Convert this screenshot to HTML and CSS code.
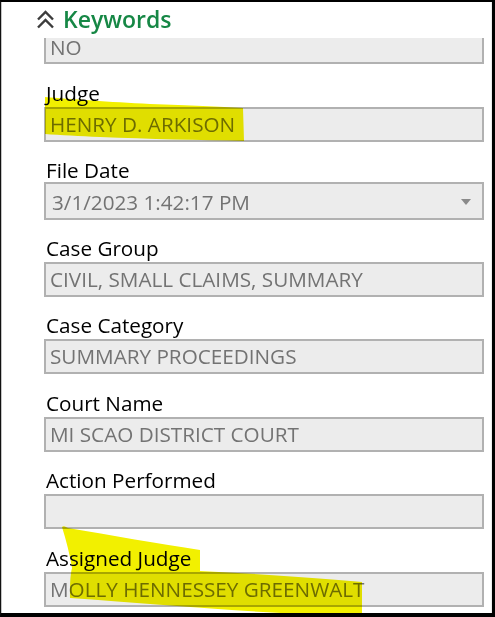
FILE: index.html
```html
<!DOCTYPE html>
<html lang="en">
<head>
<meta charset="utf-8">
<title>Keywords</title>
<link rel="stylesheet" href="styles.css">
</head>
<body>
<div class="frame">
  <div class="panel">
    <div class="header">
      <svg class="chev" width="19" height="20" viewBox="0 0 19 20" aria-hidden="true">
        <polyline points="2,9.5 9.5,2 17,9.5" />
        <polyline points="2,17.5 9.5,10 17,17.5" />
      </svg>
      <span class="title">Keywords</span>
    </div>
    <div class="viewport">
      <div class="fields">
        <div class="box first">NO</div>

        <div class="field">
          <div class="label">Judge</div>
          <div class="box">HENRY D. ARKISON</div>
        </div>
        <div class="field">
          <div class="label">File Date</div>
          <div class="box select">3/1/2023 1:42:17 PM<span class="arrow"></span></div>
        </div>
        <div class="field">
          <div class="label">Case Group</div>
          <div class="box">CIVIL, SMALL CLAIMS, SUMMARY</div>
        </div>
        <div class="field">
          <div class="label">Case Category</div>
          <div class="box">SUMMARY PROCEEDINGS</div>
        </div>
        <div class="field">
          <div class="label">Court Name</div>
          <div class="box">MI SCAO DISTRICT COURT</div>
        </div>
        <div class="field">
          <div class="label">Action Performed</div>
          <div class="box"></div>
        </div>
        <div class="field">
          <div class="label">Assigned Judge</div>
          <div class="box">MOLLY HENNESSEY GREENWALT</div>
        </div>
      </div>
    </div>
  </div>
  <svg class="marker" width="495" height="617" viewBox="0 0 495 617" aria-hidden="true">
    <path d="M45,97 C70,99 110,102 150,104 C190,105 220,107 243,108 L244,141 C200,140 150,139 100,137 C80,136 60,135 45,134 Z" />
    <path d="M62,527 C64,525 66,527 68,528 C110,535 160,544 200,550 L200,571 C260,574 320,578 362,582 L362,614 L300,614 C220,610 140,603 70,598 C70,585 70,576 72,568 C70,555 66,540 62,527 Z" />
  </svg>
</div>
</body>
</html>
```

FILE: styles.css
```css
html, body {
  margin: 0;
  padding: 0;
  background: #fff;
}

.frame {
  position: relative;
  width: 495px;
  height: 617px;
  box-sizing: border-box;
  border-top: 2px solid #000;
  border-right: 3px solid #000;
  border-bottom: 4px solid #000;
  border-left: 1px solid #111;
  overflow: hidden;
}

.panel {
  height: 100%;
  box-sizing: border-box;
  border-left: 1px solid #c4c4c4;
  border-right: 1px solid #ececec;
  display: flex;
  flex-direction: column;
  font-family: "Open Sans", "Noto Sans", sans-serif;
}

.header {
  height: 36px;
  flex: none;
  display: flex;
  align-items: center;
  padding-left: 34px;
  gap: 8px;
  box-sizing: border-box;
  padding-bottom: 2px;
}

.chev {
  flex: none;
  fill: none;
  stroke: #3c3c3c;
  stroke-width: 2.4;
  margin-top: 1px;
}

.title {
  font-size: 23px;
  font-weight: 600;
  color: #168745;
  line-height: 28px;
}

.viewport {
  flex: 1;
}

.fields {
  display: flex;
  flex-direction: column;
  padding-left: 42px;
  padding-right: 7px;
}

.box {
  position: relative;
  height: 35px;
  box-sizing: border-box;
  border: 2px solid #b1b1b1;
  background: #ececec;
  color: #737373;
  font-size: 20.7px;
  line-height: 31px;
  padding-left: 4px;
  white-space: nowrap;
}

.box.first {
  height: 26px;
  border-top: none;
  line-height: 18px;
  margin-bottom: 16.5px;
}

.field {
  display: flex;
  flex-direction: column;
  margin-bottom: 16.5px;
}

.label {
  font-size: 20.7px;
  line-height: 24px;
  height: 24px;
  color: #000;
  padding-left: 2px;
  margin-bottom: 2px;
}

.box.select {
  height: 38px;
  line-height: 36px;
  margin-top: -2px;
  margin-bottom: -1px;
  padding-left: 6px;
}

.arrow {
  position: absolute;
  right: 11px;
  top: 15px;
  width: 0;
  height: 0;
  border-left: 5px solid transparent;
  border-right: 5px solid transparent;
  border-top: 6px solid #8a8a8a;
}

.marker {
  position: absolute;
  left: -1px;
  top: -2px;
  pointer-events: none;
  mix-blend-mode: multiply;
  fill: #f2f000;
}
```
